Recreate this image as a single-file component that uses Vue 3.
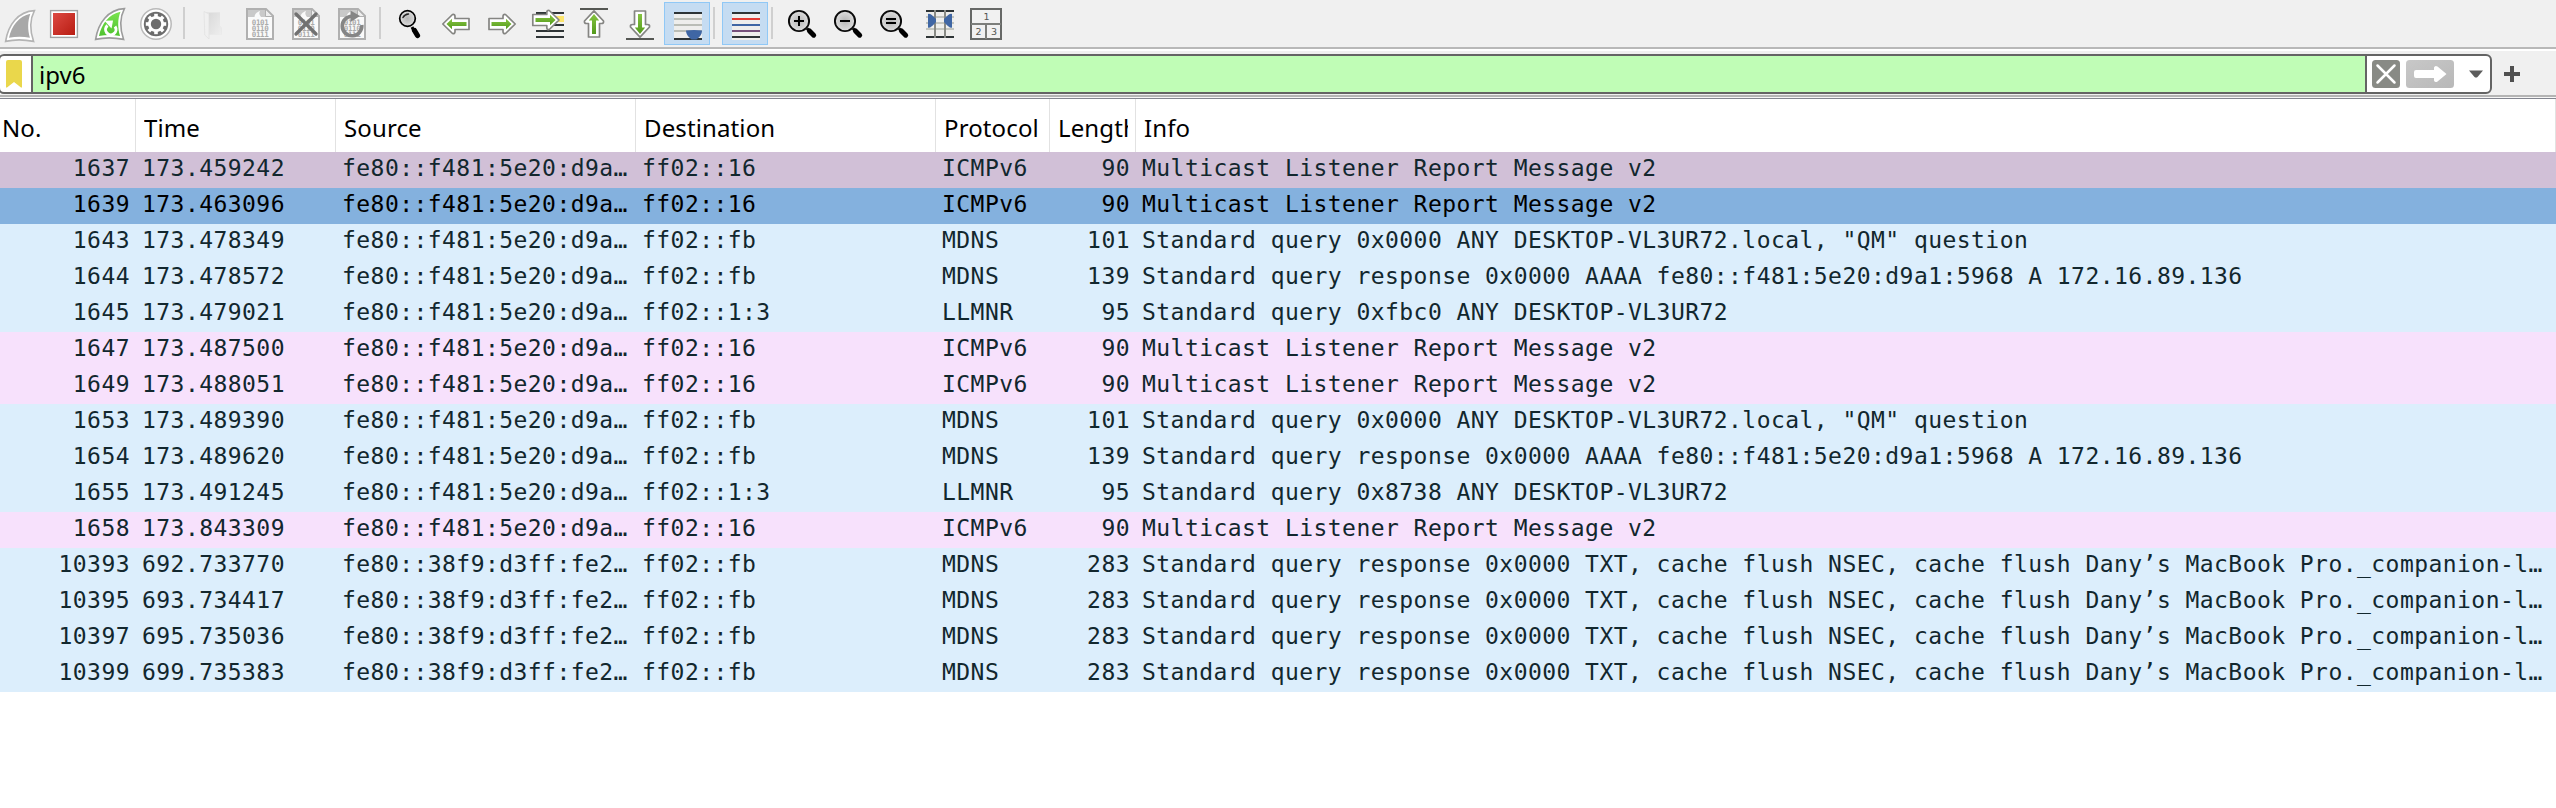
<script setup>
const columns = [
  { key: 'no', label: 'No.' },
  { key: 'time', label: 'Time' },
  { key: 'source', label: 'Source' },
  { key: 'dest', label: 'Destination' },
  { key: 'protocol', label: 'Protocol' },
  { key: 'length', label: 'Length' },
  { key: 'info', label: 'Info' },
]

const win = 'fe80::f481:5e20:d9a…'
const mac = 'fe80::38f9:d3ff:fe2…'
const report = 'Multicast Listener Report Message v2'
const question = 'Standard query 0x0000 ANY DESKTOP-VL3UR72.local, "QM" question'
const answer = 'Standard query response 0x0000 AAAA fe80::f481:5e20:d9a1:5968 A 172.16.89.136'
const companion = 'Standard query response 0x0000 TXT, cache flush NSEC, cache flush Dany’s MacBook Pro._companion-l…'

const packets = [
  [1637, '173.459242', win, 'ff02::16', 'ICMPv6', 90, report, 'related'],
  [1639, '173.463096', win, 'ff02::16', 'ICMPv6', 90, report, 'selected'],
  [1643, '173.478349', win, 'ff02::fb', 'MDNS', 101, question, 'udp'],
  [1644, '173.478572', win, 'ff02::fb', 'MDNS', 139, answer, 'udp'],
  [1645, '173.479021', win, 'ff02::1:3', 'LLMNR', 95, 'Standard query 0xfbc0 ANY DESKTOP-VL3UR72', 'udp'],
  [1647, '173.487500', win, 'ff02::16', 'ICMPv6', 90, report, 'icmp'],
  [1649, '173.488051', win, 'ff02::16', 'ICMPv6', 90, report, 'icmp'],
  [1653, '173.489390', win, 'ff02::fb', 'MDNS', 101, question, 'udp'],
  [1654, '173.489620', win, 'ff02::fb', 'MDNS', 139, answer, 'udp'],
  [1655, '173.491245', win, 'ff02::1:3', 'LLMNR', 95, 'Standard query 0x8738 ANY DESKTOP-VL3UR72', 'udp'],
  [1658, '173.843309', win, 'ff02::16', 'ICMPv6', 90, report, 'icmp'],
  [10393, '692.733770', mac, 'ff02::fb', 'MDNS', 283, companion, 'udp'],
  [10395, '693.734417', mac, 'ff02::fb', 'MDNS', 283, companion, 'udp'],
  [10397, '695.735036', mac, 'ff02::fb', 'MDNS', 283, companion, 'udp'],
  [10399, '699.735383', mac, 'ff02::fb', 'MDNS', 283, companion, 'udp'],
]

const fileIcons = ['save', 'close', 'reload']
const zoomIcons = ['in', 'out', 'normal']
const gearAngles = [0, 45, 90, 135, 180, 225, 270, 315]
</script>

<template>
  <div class="window">
    <svg class="defs" width="0" height="0">
      <defs>
        <linearGradient id="red" x1="0" y1="0" x2="1" y2="1"><stop offset="0" stop-color="#dd4a43" /><stop offset="1" stop-color="#b81c12" /></linearGradient>
        <linearGradient id="fin" x1="0" y1="0" x2="0" y2="1"><stop offset="0" stop-color="#7be34f" /><stop offset="1" stop-color="#4fc22f" /></linearGradient>
        <linearGradient id="leaf" x1="0" y1="0" x2="0" y2="1"><stop offset="0" stop-color="#86c440" /><stop offset="1" stop-color="#549a1c" /></linearGradient>
        <radialGradient id="lens"><stop offset="0" stop-color="#b5b5b5" /><stop offset="1" stop-color="#dedede" /></radialGradient>
        <linearGradient id="fold" x1="0" y1="0" x2="1" y2="1"><stop offset="0" stop-color="#dadada" /><stop offset="1" stop-color="#eeeeee" /></linearGradient>
        <linearGradient id="arrowBg" x1="0" y1="0" x2="1" y2="1"><stop offset="0" stop-color="#c8c8c8" /><stop offset="1" stop-color="#b8b8b8" /></linearGradient>
      </defs>
    </svg>

    <div class="toolbar">
      <svg class="tool" viewBox="0 0 46 48">
        <path d="M10.6 41.4C13 25 23 11.5 39.4 10.6C34.5 20 35 31 38.6 41.4C29 39.4 19 39.4 10.6 41.4Z" fill="#fff" stroke="#b4b4b4" stroke-width="1.6" />
        <path d="M14 37.8C16.5 26 24 16 35.4 13.8C32.5 21 32.6 30 34.9 37.8C28 36.5 21 36.5 14 37.8Z" fill="#a8a8a8" />
      </svg>
      <svg class="tool" viewBox="0 0 46 48">
        <rect x="9.6" y="10.6" width="26.8" height="26.8" fill="#fff" stroke="#a2a2a2" stroke-width="1.4" />
        <rect x="12" y="13" width="22" height="22" fill="url(#red)" />
      </svg>
      <svg class="tool" viewBox="0 0 46 48">
        <path d="M8.6 39.4C11 23 21 9.5 37.4 8.6C32.5 18 33 29 36.6 39.4C27 37.4 17 37.4 8.6 39.4Z" fill="#fff" stroke="#9c9c9c" stroke-width="1.6" />
        <path d="M12 36C14.5 24 22 14 33.5 11.8C30.5 19 30.6 28 33 36C26 34.5 19 34.5 12 36Z" fill="url(#fin)" />
        <path d="M20.5 25.5A5.200 5.200 0 1 0 28 26.5" fill="none" stroke="#fff" stroke-width="3" />
        <path d="M17.5 20.8L26 20.5L24.5 28.5Z" fill="#fff" />
      </svg>
      <svg class="tool" viewBox="0 0 46 48">
        <circle cx="23" cy="24" r="15.2" fill="#fff" stroke="#b9b9b9" stroke-width="1.5" />
        <circle cx="23" cy="24" r="12.2" fill="#6c6c6c" />
        <g fill="#fff">
          <circle cx="23" cy="24" r="8" />
          <rect v-for="a in gearAngles" :key="a" x="21.2" y="13.8" width="3.6" height="5" :transform="`rotate(${a} 23 24)`" />
        </g>
        <circle cx="23" cy="24" r="5.2" fill="#6c6c6c" />
      </svg>
      <i class="sep"></i>
      <svg class="tool" viewBox="0 0 46 48">
        <path d="M14 12h15v14l2 2v6.5H16Z" fill="#e6e6e6" />
        <path d="M13 11.5L18 14V39L13.8 35Z" fill="#f0f0f0" stroke="#e0e0e0" stroke-width=".7" />
        <path d="M18 13h11v13l1.5 2v6.5H18Z" fill="url(#fold)" />
      </svg>
      <svg v-for="kind in fileIcons" :key="kind" class="tool" viewBox="0 0 46 48">
        <path d="M10 9H29L36 16V39H10Z" fill="#fafafa" stroke="#b0b0b0" stroke-width="2" />
        <path d="M11 10H28.5V16H35V17H24C21 13 23 12 23 11C19 12.5 18 14 17.5 17H11Z" fill="#c9c9c9" />
        <path d="M28.5 10V16.5H35" fill="#eee" stroke="#b0b0b0" stroke-width="1" />
        <g class="bits">
          <text x="14.8" y="24.8" textLength="17">0101</text>
          <text x="14.8" y="30.8" textLength="17">0110</text>
          <text x="14.8" y="36.8" textLength="17">0111</text>
        </g>
        <path v-if="kind === 'close'" d="M13 14L33 34M33 14L13 34" stroke="#717171" stroke-width="3.4" stroke-linecap="round" />
        <g v-if="kind === 'reload'">
          <path d="M32.8 25A9.8 9.8 0 1 1 23 16.2" fill="none" stroke="#858585" stroke-width="3.6" />
          <path d="M21.5 10.5L31 16L21.5 22Z" fill="#858585" />
        </g>
      </svg>
      <i class="sep"></i>
      <svg class="tool" viewBox="0 0 46 48">
        <path d="M25 27L27 31" stroke="#000" stroke-width="3" />
        <path d="M27.5 30.5L30.5 35.5" stroke="#000" stroke-width="5.2" stroke-linecap="round" />
        <circle cx="20.5" cy="18.5" r="7.8" fill="url(#lens)" stroke="#000" stroke-width="1.7" />
        <path d="M16 17.5Q17.5 14.3 21.5 14" fill="none" stroke="#222" stroke-width="1.5" stroke-linecap="round" />
      </svg>
      <svg class="tool" viewBox="0 0 46 48">
        <path d="M9.8 24L19.5 14.5Q22 14 22 16.5V18.5H36V29.5H22V31.5Q22 34 19.5 33.5Z" fill="#fff" stroke="#858582" stroke-width="1.7" stroke-linejoin="round" />
        <path d="M13.5 24L19 18.8V22H33.5V26H19V29.2Z" fill="url(#leaf)" />
      </svg>
      <svg class="tool" viewBox="0 0 46 48">
        <path d="M36.2 24L26.5 14.5Q24 14 24 16.5V18.5H10V29.5H24V31.5Q24 34 26.5 33.5Z" fill="#fff" stroke="#858582" stroke-width="1.7" stroke-linejoin="round" />
        <path d="M32.5 24L27 18.8V22H12.5V26H27V29.2Z" fill="url(#leaf)" />
      </svg>
      <svg class="tool" viewBox="0 0 46 48">
        <path d="M11 14h28v20H11Z" fill="#f2f2f0" />
        <path d="M30 16h9v6h-9Z" fill="#fce56c" />
        <path d="M11 13H39M11 25H39M11 31H39M11 37H39" stroke="#2e3436" stroke-width="2" />
        <path d="M34 20L24.3 10.5Q21.8 10 21.8 12.5V14.5H7.8V25.5H21.8V27.5Q21.8 30 24.3 29.5Z" fill="#fff" stroke="#858582" stroke-width="1.7" stroke-linejoin="round" />
        <path d="M30.5 20L25 14.8V18H10.5V22H25V25.2Z" fill="url(#leaf)" />
      </svg>
      <svg class="tool" viewBox="0 0 46 48">
        <path d="M9 9H37" stroke="#555753" stroke-width="2" />
        <path d="M23 10.8L32.5 21Q33 23.5 30.5 23.5H28.5V37H17.5V23.5H15.5Q13 23.5 13.5 21Z" fill="#fff" stroke="#858582" stroke-width="1.7" stroke-linejoin="round" />
        <path d="M23 14L28.2 20.5H25V34H21V20.5H17.8Z" fill="url(#leaf)" />
      </svg>
      <svg class="tool" viewBox="0 0 46 48">
        <path d="M9 39H37" stroke="#555753" stroke-width="2" />
        <path d="M23 37.2L32.5 27Q33 24.5 30.5 24.5H28.5V11H17.5V24.5H15.5Q13 24.5 13.5 27Z" fill="#fff" stroke="#858582" stroke-width="1.7" stroke-linejoin="round" />
        <path d="M23 34L28.2 27.5H25V14H21V27.5H17.8Z" fill="url(#leaf)" />
      </svg>
      <svg class="tool" viewBox="0 0 46 48">
        <rect x="1.5" y="2.5" width="45" height="42" fill="#c5dcf2" stroke="#90c8f6" />
        <path d="M11 12h28v28H11Z" fill="#eeeeec" />
        <path d="M11 13H39M11 39H39" stroke="#2e3436" stroke-width="2" />
        <path d="M11 19H39M11 25H39M11 31H39" stroke="#babdb6" stroke-width="2" />
        <path d="M23 30.5Q31 29.5 39 30.5Q39.2 35.5 33.5 39.5H28.5Q23 35.5 23 30.5Z" fill="#3f66a4" />
      </svg>
      <i class="sep"></i>
      <svg class="tool" viewBox="0 0 46 48">
        <rect x="1.5" y="2.5" width="45" height="42" fill="#c5dcf2" stroke="#90c8f6" />
        <path d="M11 12h28v28H11Z" fill="#eeeeec" />
        <path d="M11 13H39M11 37H39" stroke="#2e3436" stroke-width="2" />
        <path d="M11 19H39" stroke="#e23a32" stroke-width="2" />
        <path d="M11 25H39" stroke="#3f66a4" stroke-width="2" />
        <path d="M11 31H39" stroke="#75507b" stroke-width="2" />
      </svg>
      <i class="sep"></i>
      <svg v-for="kind in zoomIcons" :key="kind" class="tool" viewBox="0 0 46 48">
        <path d="M28 28.5L31 31.5" stroke="#000" stroke-width="3" />
        <path d="M30.5 31L34.7 35.2" stroke="#000" stroke-width="5" stroke-linecap="round" />
        <circle cx="20" cy="21" r="10.1" fill="url(#lens)" stroke="#0a0a0a" stroke-width="1.9" />
        <path v-if="kind === 'in'" d="M15 21H25M20 16V26" stroke="#000" stroke-width="2" />
        <path v-if="kind === 'out'" d="M15 21H25" stroke="#000" stroke-width="2" />
        <path v-if="kind === 'normal'" d="M15 19H25M15 23H25" stroke="#000" stroke-width="2" />
      </svg>
      <svg class="tool" viewBox="0 0 46 48">
        <path d="M9 11h28v26H9Z" fill="#eeeeec" />
        <path d="M9 17H37M9 23H37M9 29H37" stroke="#c3c5bf" stroke-width="2" />
        <path d="M9 11H37M9 37H37" stroke="#2e3436" stroke-width="2" />
        <path d="M18 10V38M28 10V38" stroke="#888a85" stroke-width="2" />
        <path d="M11 14Q13 12.5 19 19V22Q13 29 11 27.5Z" fill="#3f66a4" />
        <path d="M35 14Q33 12.5 27 19V22Q33 29 35 27.5Z" fill="#3f66a4" />
      </svg>
      <svg class="tool" viewBox="0 0 46 48">
        <rect x="8" y="9" width="30" height="30" fill="#f1f1f1" stroke="#666866" stroke-width="2" />
        <path d="M8 24H38M23 24V39" stroke="#7c7e7b" stroke-width="2" />
        <g class="panes">
          <text x="23.5" y="19.5">1</text>
          <text x="15.5" y="35">2</text>
          <text x="31" y="35">3</text>
        </g>
      </svg>
    </div>

    <div class="filterbar">
      <div class="field">
        <div class="bookmark">
          <svg width="16" height="28" viewBox="0 0 16 28"><path d="M0 2Q0 0 2 0H14Q16 0 16 2V27.5H15L8 22L1 27.5H0Z" fill="#ead74b" /></svg>
        </div>
        <div class="expression">ipv6</div>
        <div class="actions">
          <svg width="28" height="28" viewBox="0 0 28 28">
            <rect width="28" height="28" rx="3.5" fill="#888a85" />
            <path d="M5.5 5.5L22.5 22.5M22.5 5.5L5.5 22.5" stroke="#fff" stroke-width="2.5" stroke-linecap="round" />
          </svg>
          <svg class="apply" width="48" height="28" viewBox="0 0 48 28">
            <rect width="48" height="28" rx="3.5" fill="url(#arrowBg)" />
            <path d="M10 10H28V7.5Q29 5 31.5 6.5L40.5 14L31.5 21.5Q29 23 28 20.5V18H10Q8 18 8 16V12Q8 10 10 10Z" fill="#fff" />
          </svg>
          <svg class="caret" width="14" height="8" viewBox="0 0 14 8"><path d="M0 .5H14L8.5 7Q7 8 5.5 7Z" fill="#5c5c5c" /></svg>
        </div>
      </div>
      <svg class="plus" width="16" height="16" viewBox="0 0 16 16"><path d="M0 8H16M8 0V16" stroke="#505050" stroke-width="4" /></svg>
    </div>

    <div class="packets">
      <div class="row head">
        <div v-for="c in columns" :key="c.key" class="cell" :class="c.key"><span>{{ c.label }}</span></div>
      </div>
      <div v-for="p in packets" :key="p[0]" class="row packet" :class="p[7]">
        <div v-for="(c, i) in columns" :key="c.key" class="cell" :class="c.key">{{ p[i] }}</div>
      </div>
    </div>
  </div>
</template>

<style>
body {
  background: #fff;
  overflow: hidden;
}
</style>

<style scoped>
.window {
  height: 808px;
  overflow: hidden;
  background: #fff;
  font-family: "Noto Sans", "Open Sans", sans-serif;
  font-size: 24px;
  color: #000;
}
.defs {
  display: block;
}
.toolbar {
  box-sizing: border-box;
  display: flex;
  height: 51px;
  padding-right: 10px;
  background: #f0f0f0;
  border-bottom: 2px solid #fff;
  box-shadow: inset 0 -2px #b8b8b8;
}
.tool {
  flex: none;
  width: 46px;
  height: 48px;
  overflow: visible;
}
.tool:first-child {
  margin-left: -5px;
}
.sep {
  flex: none;
  width: 2px;
  height: 32px;
  margin: 7px 6px 0 4px;
  background: #cfcfcf;
}
.bits {
  font: bold 7.5px "DejaVu Sans Mono", monospace;
  fill: #ababab;
}
.panes {
  font: 9.5px "DejaVu Sans", sans-serif;
  fill: #555753;
  text-anchor: middle;
}
.filterbar {
  box-sizing: border-box;
  display: flex;
  align-items: center;
  height: 48px;
  padding: 3px 0 5px;
  background: #f0f0f0;
  box-shadow: inset 0 -1px #83858f, inset 0 -2px #f6f6f6, inset 0 -4px #b4b4b4;
}
.field {
  box-sizing: border-box;
  display: flex;
  width: 2494px;
  height: 40px;
  margin-left: -2px;
  border: 2px solid #646464;
  border-radius: 6px;
  background: #fff;
  overflow: hidden;
}
.bookmark {
  display: flex;
  align-items: center;
  width: 31px;
  padding-left: 6px;
  box-sizing: border-box;
}
.expression {
  flex: 1;
  padding-left: 6px;
  line-height: 38px;
  background: #c0fdb6;
  border-left: 2px solid #646464;
  border-right: 2px solid #646464;
}
.actions {
  display: flex;
  align-items: center;
  width: 123px;
  padding-left: 5px;
  box-sizing: border-box;
}
.apply {
  margin-left: 6px;
}
.caret {
  margin-left: 15px;
}
.plus {
  margin-left: 12px;
}
.row {
  display: grid;
  grid-template-columns: 136px 200px 300px 300px 114px 86px 1fr;
}
.cell {
  box-sizing: border-box;
  white-space: pre;
  overflow: hidden;
}
.head {
  height: 53px;
  background: #fff;
}
.head .cell {
  padding: 4px 7px 0 8px;
  line-height: 49px;
  letter-spacing: 0.12px;
  border-right: 1px solid #e2e2e2;
}
.head .no {
  padding-left: 2px;
}
.head span {
  display: block;
  overflow: hidden;
}
.packet {
  height: 36px;
  font-family: "DejaVu Sans Mono", "Liberation Mono", monospace;
  font-size: 23px;
  letter-spacing: 0.447px;
  line-height: 32px;
  color: #12272e;
}
.packet .cell {
  padding: 0 6px;
}
.packet .no,
.packet .length {
  text-align: right;
}
.related {
  background: #d1c0d7;
}
.selected {
  background: #84b1de;
  color: #000;
}
.udp {
  background: #dceefc;
}
.icmp {
  background: #f7e1fc;
}
</style>
